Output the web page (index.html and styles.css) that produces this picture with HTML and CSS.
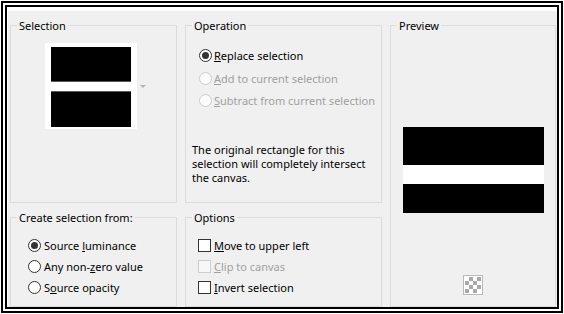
FILE: index.html
```html
<!DOCTYPE html>
<html>
<head>
<meta charset="utf-8">
<link rel="stylesheet" href="styles.css">
</head>
<body>
<div class="outer">
  <div class="inner">
    <div class="grid">
      <div class="group sel">
        <div class="title">Selection</div>
        <div class="thumbrow">
          <div class="thumb">
            <div class="tb top"></div>
            <div class="tb bottom"></div>
          </div>
          <div class="arrow"></div>
        </div>
      </div>

      <div class="group op">
        <div class="title">Operation</div>
        <div class="opts">
          <div class="row r1"><span class="radio checked"></span><span><u>R</u>eplace selection</span></div>
          <div class="row r2 disabled"><span class="radio"></span><span><u>A</u>dd to current selection</span></div>
          <div class="row r3 disabled"><span class="radio"></span><span><u>S</u>ubtract from current selection</span></div>
        </div>
        <p class="note">The original rectangle for this selection will completely intersect the canvas.</p>
      </div>

      <div class="group preview">
        <div class="title">Preview</div>
        <div class="pv">
          <div class="pv-top"></div>
          <div class="pv-mid"></div>
          <div class="pv-bot"></div>
        </div>
        <div class="checker"><div class="checker-in"></div></div>
      </div>

      <div class="group create">
        <div class="title">Create selection from:</div>
        <div class="list">
          <div class="row"><span class="radio checked"></span><span>Source <u>l</u>uminance</span></div>
          <div class="row"><span class="radio"></span><span>Any non-<u>z</u>ero value</span></div>
          <div class="row"><span class="radio"></span><span>S<u>o</u>urce opacity</span></div>
        </div>
      </div>

      <div class="group options">
        <div class="title">Options</div>
        <div class="list">
          <div class="row"><span class="check"></span><span><u>M</u>ove to upper left</span></div>
          <div class="row disabled"><span class="check"></span><span><u>C</u>lip to canvas</span></div>
          <div class="row"><span class="check"></span><span><u>I</u>nvert selection</span></div>
        </div>
      </div>
    </div>
  </div>
</div>
</body>
</html>
```

FILE: styles.css
```css
* { box-sizing: border-box; }
html, body { margin: 0; padding: 0; background: #fff; }
body {
  font-family: "Noto Sans", "Open Sans", sans-serif;
  font-size: 11px;
  color: #000;
}
.outer {
  margin: 1px 0 0 1px;
  width: 562px;
  height: 312px;
  border: 2px solid #000;
  padding: 2px;
  background: #fff;
}
.inner {
  width: 100%;
  height: 100%;
  border: 2px solid #000;
  background: #f0f0f0;
  box-shadow: inset 1px 4px 0 #fff;
  overflow: hidden;
}
.grid {
  display: grid;
  grid-template-columns: 167px 197px 166px;
  grid-template-rows: 178px 90px;
  column-gap: 8px;
  row-gap: 14px;
  padding: 18px 1px 0 3px;
}
.group {
  border: 1px solid #dcdcdc;
  min-width: 0;
}
.title {
  width: fit-content;
  margin: -8px 0 0 6px;
  padding: 0 2px;
  line-height: 15px;
  height: 15px;
  background: #f0f0f0;
  white-space: nowrap;
}
.sel { grid-column: 1; grid-row: 1; }
.op { grid-column: 2; grid-row: 1; }
.preview { grid-column: 3; grid-row: 1 / span 2; }
.create { grid-column: 1; grid-row: 2; }
.options { grid-column: 2; grid-row: 2; }

/* selection thumbnail */
.thumbrow {
  display: flex;
  align-items: center;
  margin: 10px 0 0 34px;
}
.thumb {
  width: 92px;
  height: 86px;
  background: #fff;
  padding: 4px 6px 2px;
  display: flex;
  flex-direction: column;
  justify-content: space-between;
}
.tb { background: #000; }
.tb.top { height: 35px; border-bottom: 1px solid #5a5a5a; }
.tb.bottom { height: 36px; border-top: 1px solid #5a5a5a; }
.arrow {
  width: 0; height: 0;
  margin: 0 0 0 3px;
  border-left: 3px solid transparent;
  border-right: 3px solid transparent;
  border-top: 3px solid #b4b4b4;
}

/* rows */
.row {
  display: flex;
  align-items: center;
  white-space: nowrap;
  line-height: 15px;
}
.opts { margin-top: 11px; padding-left: 13px; }
.opts .row { height: 22px; }
.opts .r1 { height: 23px; }
.list { margin-top: 10px; }
.list .row { height: 21px; }
.create .list { padding-left: 17px; }
.options .list { padding-left: 12px; }
.disabled { color: #a0a0a0; }

.radio {
  flex: none;
  width: 13px;
  height: 13px;
  border-radius: 50%;
  border: 1px solid #333;
  background: #fff;
  margin-right: 2px;
  position: relative;
}
.radio.checked::after {
  content: "";
  position: absolute;
  left: 2px; top: 2px;
  width: 7px; height: 7px;
  border-radius: 50%;
  background: #333;
}
.disabled .radio { border-color: #cccccc; background: #fbfbfb; }
.create .radio { margin-right: 3px; }

.check {
  flex: none;
  width: 13px;
  height: 13px;
  border: 1px solid #333;
  background: #fff;
  margin-right: 3px;
}
.disabled .check { border-color: #cccccc; background: #f7f7f7; }

.note {
  margin: 32px 0 0 0;
  padding-left: 6px;
  line-height: 14px;
  width: 190px;
}

/* preview */
.preview { display: flex; flex-direction: column; }
.pv {
  margin: 94px 0 0 12px;
  width: 141px;
  display: flex;
  flex-direction: column;
}
.pv-top { height: 38px; background: #000; }
.pv-mid { height: 19px; background: #fff; }
.pv-bot { height: 29px; background: #000; }
.checker {
  margin: 62px auto 0;
  width: 20px;
  height: 20px;
  border: 1px solid #b9b9b9;
  padding: 1px;
  background: #fff;
}
.checker-in {
  width: 100%;
  height: 100%;
  background-color: #fff;
  background-image:
    linear-gradient(45deg, #a8a8a8 25%, transparent 25%, transparent 75%, #a8a8a8 75%),
    linear-gradient(45deg, #a8a8a8 25%, transparent 25%, transparent 75%, #a8a8a8 75%);
  background-size: 8px 8px;
  background-position: 0 0, 4px 4px;
}
```
